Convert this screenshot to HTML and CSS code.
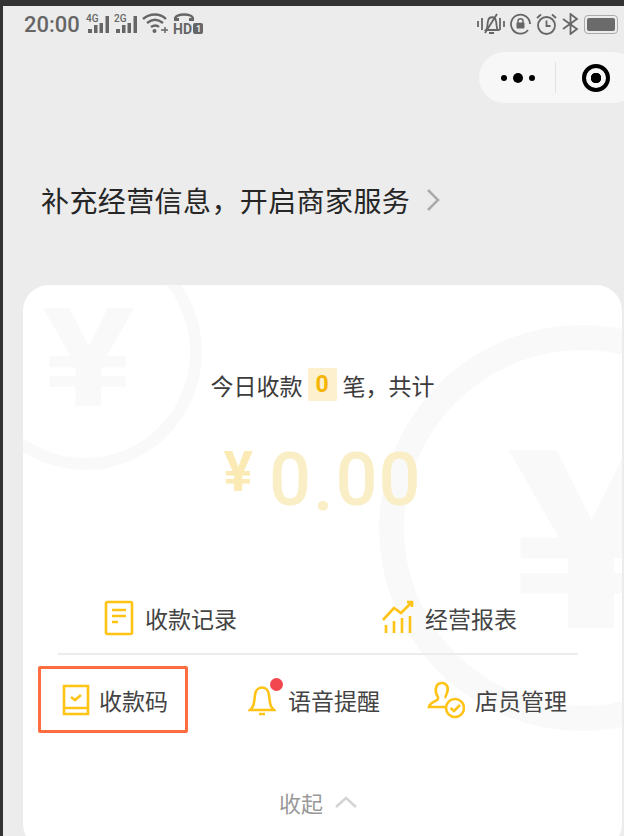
FILE: index.html
```html
<!DOCTYPE html>
<html lang="zh-CN">

<head>
    <meta charset="utf-8">
    <meta name="viewport" content="width=device-width, initial-scale=1">
    <title>收款</title>
    <link rel="stylesheet" href="styles.css">
</head>

<body>
    <div class="screen">
        <div class="status">
            <div class="status-group">
                <span class="time">20:00</span>
                <svg width="24" height="22" viewBox="0 0 24 22" class="sig">
                    <text x="0" y="9" class="sig-text">4G</text>
                    <rect x="2" y="16" width="4" height="4"/><rect x="8" y="12" width="3.500" height="8"/><rect x="13.500" y="10" width="3.500" height="10"/><rect x="19.500" y="3" width="3.500" height="17"/>
                </svg>
                <svg width="24" height="22" viewBox="0 0 24 22" class="sig">
                    <text x="0" y="9" class="sig-text">2G</text>
                    <rect x="2" y="16" width="4" height="4"/><rect x="8" y="12" width="3.500" height="8"/><rect x="13.500" y="10" width="3.500" height="10"/><rect x="19.500" y="3" width="3.500" height="17"/>
                </svg>
                <svg width="27" height="22" viewBox="0 0 27 22" class="wifi">
                    <path d="M1 6c7-6 17-6 23 0M5 10c5-4 11-4 16 0M9 14c3-2 6-2 8 0"/>
                    <circle cx="12.500" cy="18" r="2" class="fill"/>
                    <path d="M19 17h7M23 14v6" class="thin"/>
                </svg>
                <svg width="30" height="22" viewBox="0 0 30 22" class="hd">
                    <path d="M2 6c0-6 18-6 18 0" class="arc"/>
                    <rect x="1" y="5" width="5" height="3"/><rect x="16" y="5" width="5" height="3"/>
                    <text x="0" y="21" class="hd-text">HD</text>
                    <rect x="20" y="10" width="10" height="11" rx="2"/>
                    <text x="23" y="19" class="hd-one">1</text>
                </svg>
            </div>
            <div class="status-group status-right">
                <svg width="28" height="22" viewBox="0 0 28 22" class="mute">
                    <path d="M1 8v6M5 5v12M23 5v12M27 8v6"/>
                    <path d="M9 17c2-2 1-5 2-9 1-5 7-5 8 0 1 4 0 7 2 9zM8 20 20 1M12 20h5"/>
                </svg>
                <svg width="21" height="22" viewBox="0 0 21 22" class="lockring">
                    <path d="M18 17A9.500 9.500 0 1 1 20 11"/>
                    <rect x="6.500" y="9.500" width="8" height="6" rx="1" class="fill"/>
                    <path d="M8 10V8c0-3 5-3 5 0v2" class="thin"/>
                </svg>
                <svg width="21" height="23" viewBox="0 0 21 23" class="alarm">
                    <circle cx="10.500" cy="12.500" r="8.500"/>
                    <path d="M10.500 7.500v5.500h4M1 5l4-3.500M20 5l-4-3.500"/>
                </svg>
                <svg width="17" height="22" viewBox="0 0 17 22" class="bt">
                    <path d="M1 6l14 10-6.500 5V1L15 6 1 16"/>
                </svg>
                <div class="battery"><span class="battery-level"></span></div>
            </div>
        </div>

        <div class="capsule">
            <div class="capsule-dots">
                <span class="dot-small"></span><span class="dot-big"></span><span class="dot-small"></span>
            </div>
            <span class="capsule-line"></span>
            <span class="capsule-target"></span>
        </div>

        <div class="title">
            <span>补充经营信息，开启商家服务</span>
            <svg width="14" height="24" viewBox="0 0 14 24" class="title-arrow"><path d="M2 2l10 10L2 22"/></svg>
        </div>

        <div class="card">
            <div class="bg-circle bg-circle-left"></div>
            <div class="bg-yen bg-yen-left">¥</div>
            <div class="bg-circle bg-circle-right"></div>
            <div class="bg-yen bg-yen-right">¥</div>

            <div class="count">
                <span>今日收款</span><span class="count-badge">0</span><span>笔，共计</span>
            </div>

            <div class="amount">
                <span class="amount-yen">¥</span><span>0</span><span class="amount-dot">.</span><span>00</span>
            </div>

            <div class="row row-top">
                <div class="item item-record">
                    <svg width="30" height="36" viewBox="0 0 30 36" class="icon">
                        <rect x="2" y="2" width="26" height="32" rx="1.500"/>
                        <path d="M8 10h14M8 16h14M8 22h6"/>
                    </svg>
                    <span>收款记录</span>
                </div>
                <div class="item">
                    <svg width="32" height="36" viewBox="0 0 32 36" class="icon">
                        <path d="M1 20 12 8l7 5L30 2M25 2h5v5"/>
                        <path d="M4 25v8M12 21v12M20 18v15M28 16v17"/>
                    </svg>
                    <span>经营报表</span>
                </div>
            </div>

            <div class="divider"></div>

            <div class="row row-bottom">
                <div class="item item-code">
                    <svg width="28" height="32" viewBox="0 0 28 32" class="icon">
                        <path d="M2 24V2h24v28H2zM2 24h24"/>
                        <path d="M9 13l4 3 6-5"/>
                    </svg>
                    <span>收款码</span>
                </div>
                <div class="item item-voice">
                    <div class="bell">
                        <svg width="28" height="36" viewBox="0 0 28 36" class="icon">
                            <path d="M2 28c4-3 4-7 5-15 1-10 13-10 14 0 1 8 1 12 5 15zM11 32h6"/>
                        </svg>
                        <span class="bell-dot"></span>
                    </div>
                    <span>语音提醒</span>
                </div>
                <div class="item item-staff">
                    <svg width="38" height="38" viewBox="0 0 38 38" class="icon">
                        <path d="M18 26H2c1-5 7-5 9-8 1-2-1-3-2-6C8 6 10 2 15 2s7 5 5 10c-1 2-2 4-1 5"/>
                        <circle cx="28" cy="27" r="9"/>
                        <path d="M23.500 27l3.500 3 6-6"/>
                    </svg>
                    <span>店员管理</span>
                </div>
            </div>

            <div class="collapse">
                <span>收起</span>
                <svg width="24" height="14" viewBox="0 0 24 14" class="collapse-arrow"><path d="M2 12 12 3l10 9"/></svg>
            </div>
        </div>
    </div>
</body>

</html>
```

FILE: styles.css
```css
html,
body {
    margin: 0;
    padding: 0;
}

body {
    width: 624px;
    height: 836px;
    overflow: hidden;
    background-color: #333333;
    font-family: "Noto Sans CJK SC", Roboto, sans-serif;
    color: #3a3a3a;
}

.screen {
    margin: 6px 0 0 3px;
    height: 830px;
    background-color: #ececec;
    overflow: hidden;
}

.status {
    display: flex;
    justify-content: space-between;
    align-items: center;
    height: 36px;
    padding: 0 3px 0 21px;
}

.status-group {
    display: flex;
    align-items: center;
    gap: 4px;
}

.status-right {
    gap: 5px;
}

.time {
    font-family: Roboto, sans-serif;
    font-size: 22px;
    font-weight: 500;
    color: #666666;
    margin-right: 2px;
}

.sig {
    fill: #666666;
}

.sig-text {
    font-family: Roboto, sans-serif;
    font-size: 10px;
    font-weight: 500;
}

.wifi path,
.mute path,
.alarm circle,
.alarm path,
.bt path,
.lockring path,
.hd .arc {
    fill: none;
    stroke: #666666;
    stroke-width: 2.400;
}

.wifi .thin,
.lockring .thin {
    stroke-width: 1.500;
}

.mute path,
.alarm circle,
.alarm path,
.bt path,
.lockring path {
    stroke-width: 1.800;
}

.fill {
    fill: #666666;
}

.hd {
    fill: #666666;
}

.hd-text {
    font-family: Roboto, sans-serif;
    font-size: 14px;
    font-weight: 700;
}

.hd-one {
    font-family: Roboto, sans-serif;
    font-size: 9px;
    font-weight: 700;
    fill: #ececec;
}

.battery {
    display: flex;
    width: 34px;
    height: 19px;
    padding: 2px;
    box-sizing: border-box;
    border: 1px solid #aaaaaa;
    border-radius: 4px;
    margin-right: 3px;
}

.battery-level {
    flex: 1;
    background-color: #6b6b6b;
    border-radius: 2px;
}

.capsule {
    display: flex;
    align-items: center;
    width: 160px;
    height: 51px;
    margin: 10px 0 0 476px;
    background-color: #f7f7f7;
    border-radius: 26px;
}

.capsule-dots {
    display: flex;
    align-items: center;
    gap: 6px;
    margin-left: 22px;
}

.dot-small {
    width: 6px;
    height: 6px;
    border-radius: 50%;
    background-color: #000000;
}

.dot-big {
    width: 10px;
    height: 10px;
    border-radius: 50%;
    background-color: #000000;
}

.capsule-line {
    width: 1px;
    height: 31px;
    margin-left: 20px;
    background-color: #e2e2e2;
}

.capsule-target {
    display: flex;
    width: 28px;
    height: 28px;
    box-sizing: border-box;
    margin-left: 26px;
    border: 4px solid #000000;
    border-radius: 50%;
    background: radial-gradient(circle, #000000 0 5px, transparent 5.500px);
}

.title {
    display: flex;
    align-items: center;
    height: 40px;
    margin: 77px 0 65px 38px;
    font-size: 28px;
    letter-spacing: 0.400px;
    color: #262626;
}

.title-arrow {
    margin-left: 16px;
}

.title-arrow path {
    fill: none;
    stroke: #aaaaaa;
    stroke-width: 2.500;
}

.card {
    position: relative;
    width: 599px;
    height: 565px;
    margin-left: 20px;
    background-color: #ffffff;
    border-radius: 26px;
    overflow: hidden;
}

.bg-circle {
    position: absolute;
    box-sizing: border-box;
    border-style: solid;
    border-color: #f9f9f9;
    border-radius: 50%;
}

.bg-circle-left {
    left: -55px;
    top: -51px;
    width: 234px;
    height: 236px;
    border-width: 12px;
}

.bg-circle-right {
    left: 356px;
    top: 40px;
    width: 406px;
    height: 406px;
    border-width: 25px;
}

.bg-yen {
    position: absolute;
    font-family: Roboto, sans-serif;
    font-weight: 700;
    line-height: 1;
    color: #f9f9f9;
    transform-origin: left top;
    transform: scaleX(1.260);
}

.bg-yen-left {
    left: 19px;
    top: 5px;
    font-size: 138px;
}

.bg-yen-right {
    left: 484px;
    top: 133px;
    font-size: 250px;
}

.count {
    position: relative;
    display: flex;
    justify-content: center;
    align-items: center;
    height: 33px;
    padding-top: 83px;
    font-size: 23px;
    color: #3c3c3c;
}

.count-badge {
    width: 29px;
    height: 33px;
    margin: 0 6px 0 5px;
    background-color: #fcf0ce;
    font-family: Roboto, sans-serif;
    font-size: 23px;
    font-weight: 700;
    line-height: 33px;
    text-align: center;
    color: #f4b400;
}

.amount {
    position: relative;
    display: flex;
    justify-content: center;
    align-items: flex-start;
    height: 88px;
    margin-top: 35px;
    font-family: Roboto, sans-serif;
    font-size: 74px;
    font-weight: 500;
    line-height: 88px;
    letter-spacing: 1px;
    color: #faeec6;
}

.amount-yen {
    margin: 7px 16px 0 0;
    font-size: 55px;
    font-weight: 700;
    line-height: 58px;
    letter-spacing: 0;
    color: #fbeab4;
}

.amount-dot {
    margin: 5px 1px 0 1px;
}

.row {
    position: relative;
    display: flex;
    align-items: center;
}

.row-top {
    height: 40px;
    margin-top: 74px;
    padding-left: 81px;
}

.row-bottom {
    margin-top: 11px;
    margin-left: 15px;
}

.item {
    display: flex;
    align-items: center;
    gap: 11px;
    font-size: 23px;
    color: #444444;
}

.item-record {
    width: 278px;
    gap: 11px;
}

.item-code {
    box-sizing: border-box;
    width: 150px;
    height: 67px;
    padding-left: 21px;
    gap: 9px;
    border: 3px solid #ff6c3f;
    border-radius: 2px;
}

.item-voice {
    margin: 0 47px 0 60px;
    gap: 12px;
}

.item-staff {
    gap: 10px;
}

.icon {
    flex-shrink: 0;
}

.icon path,
.icon rect,
.icon circle {
    fill: none;
    stroke: #ffc316;
    stroke-width: 2.600;
}

.bell {
    position: relative;
    display: flex;
}

.bell-dot {
    position: absolute;
    top: -4px;
    right: -7px;
    width: 13px;
    height: 13px;
    border-radius: 50%;
    background-color: #f2474f;
}

.divider {
    position: relative;
    width: 520px;
    height: 2px;
    margin: 15px 0 0 35px;
    background-color: #ececec;
}

.collapse {
    position: relative;
    display: flex;
    justify-content: center;
    align-items: center;
    gap: 11px;
    height: 30px;
    margin-top: 54px;
    padding-right: 8px;
    font-size: 22px;
    color: #999999;
}

.collapse-arrow path {
    fill: none;
    stroke: #d4d4d4;
    stroke-width: 2.500;
}
```
